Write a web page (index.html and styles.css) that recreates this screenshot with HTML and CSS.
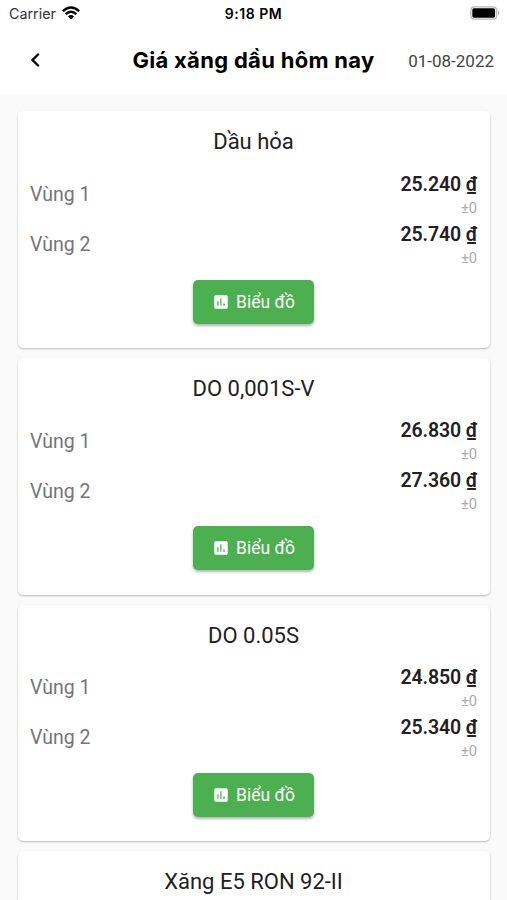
FILE: index.html
```html
<!DOCTYPE html>
<html lang="vi">
<head>
<meta charset="utf-8">
<title>Giá xăng dầu hôm nay</title>
<link rel="stylesheet" href="styles.css">
</head>
<body>
<svg class="defs" width="0" height="0" aria-hidden="true">
  <symbol id="chart" viewBox="0 0 24 24"><path fill-rule="evenodd" d="M19 3H5c-1.100 0-2 .9-2 2v14c0 1.100.9 2 2 2h14c1.100 0 2-.9 2-2V5c0-1.100-.9-2-2-2zM8.700 17H7v-6h1.700v6zm4 0H11V7h1.700v10zm4.300 0h-2v-3h2v3z"/></symbol>
</svg>
<header class="header">
  <div class="status">
    <div class="carrier"><span class="carrier-name">Carrier</span>
      <svg class="wifi" viewBox="0 0 18 14"><path d="M.9 5.200Q9-2.200 17.100 5.200M3.700 8.200Q9 3.200 14.300 8.200" fill="none" stroke="#000" stroke-width="2.500"/><path d="M6 10.400Q9 7.600 12 10.400L9 13.500Z"/></svg>
    </div>
    <span class="time">9:18 PM</span>
    <svg class="battery" viewBox="0 0 30 14"><rect x=".8" y=".8" width="25.800" height="12.400" rx="3.400" fill="#fff" stroke="#b8b8b8" stroke-width="1.300"/><rect x="2.300" y="2.300" width="22.800" height="9.400" rx="1.700"/><path d="M28 4.800q3 2.200 0 4.400z" fill="#aaa"/></svg>
  </div>
  <div class="navbar">
    <svg class="back" viewBox="0 0 12 16"><path d="M9.800 1.800 3.500 8l6.300 6.200" fill="none" stroke="#000" stroke-width="2.300"/></svg>
    <h1 class="heading">Giá xăng dầu hôm nay</h1>
    <span class="date">01-08-2022</span>
  </div>
</header>
<main class="list">
  <section class="card">
    <h2 class="name">Dầu hỏa</h2>
    <div class="row"><span class="zone">Vùng 1</span><div class="values"><b class="price">25.240 ₫</b><span class="delta">±0</span></div></div>
    <div class="row"><span class="zone">Vùng 2</span><div class="values"><b class="price">25.740 ₫</b><span class="delta">±0</span></div></div>
    <button class="button"><svg class="chart"><use href="#chart"/></svg><span class="label">Biểu đồ</span></button>
  </section>
  <section class="card">
    <h2 class="name">DO 0,001S-V</h2>
    <div class="row"><span class="zone">Vùng 1</span><div class="values"><b class="price">26.830 ₫</b><span class="delta">±0</span></div></div>
    <div class="row"><span class="zone">Vùng 2</span><div class="values"><b class="price">27.360 ₫</b><span class="delta">±0</span></div></div>
    <button class="button"><svg class="chart"><use href="#chart"/></svg><span class="label">Biểu đồ</span></button>
  </section>
  <section class="card">
    <h2 class="name">DO 0.05S</h2>
    <div class="row"><span class="zone">Vùng 1</span><div class="values"><b class="price">24.850 ₫</b><span class="delta">±0</span></div></div>
    <div class="row"><span class="zone">Vùng 2</span><div class="values"><b class="price">25.340 ₫</b><span class="delta">±0</span></div></div>
    <button class="button"><svg class="chart"><use href="#chart"/></svg><span class="label">Biểu đồ</span></button>
  </section>
  <section class="card card-last">
    <h2 class="name">Xăng E5 RON 92-II</h2>
  </section>
</main>
</body>
</html>
```
FILE: styles.css
```css
* { box-sizing: border-box; }
body { margin: 0; height: 900px; overflow: hidden; display: flex; flex-direction: column; background: #fafafa; color: #212121; font-family: Roboto, sans-serif; }
.defs { display: none; }
.header { flex: none; height: 94px; background: #fff; color: #000; font-family: Inter, sans-serif; }
.status { height: 28px; display: grid; grid-template-columns: 1fr auto 1fr; align-items: center; padding: 0 7px 2px; }
.carrier { display: flex; align-items: center; gap: 6px; padding-left: 2px; }
.carrier-name { font-size: 14.300px; color: #333; }
.wifi { width: 18px; height: 14px; }
.time { font-size: 14px; font-weight: 600; letter-spacing: .55px; }
.battery { width: 30px; height: 14px; justify-self: end; }
.navbar { height: 66px; display: grid; grid-template-columns: 1fr auto 1fr; align-items: center; padding: 0 13px 2px; }
.back { width: 12px; height: 16px; margin-left: 15.500px; }
.heading { margin: 0; font-size: 22px; font-weight: 650; letter-spacing: .3px; line-height: 30px; white-space: nowrap; }
.date { justify-self: end; font: 17px/24px Roboto, sans-serif; color: #444; padding-top: 2px; }
.list { flex: 1; min-height: 0; overflow: hidden; display: flex; flex-direction: column; gap: 10px; padding: 17.300px 17px 0 18px; }
.card { flex: none; height: 236.700px; display: flex; flex-direction: column; padding: 16px 13px 0 12px; background: #fff; border-radius: 5px; box-shadow: 0 1px 2px rgba(0, 0, 0, .27); }
.card-last { flex: 1; height: auto; min-height: 0; border-radius: 5px 5px 0 0; }
.name { margin: 0 0 14.300px; font-size: 22px; font-weight: 400; line-height: 29px; text-align: center; }
.row { height: 50px; display: flex; justify-content: space-between; align-items: center; }
.zone { font-size: 19.500px; line-height: 24px; margin-top: -1px; color: #757575; }
.values { display: flex; flex-direction: column; align-items: flex-end; }
.price { font-size: 19.500px; font-weight: 600; letter-spacing: -.1px; line-height: 26px; margin-top: -1px; }
.delta { font-size: 14.700px; line-height: 21px; color: #aaa; }
.button { align-self: center; width: 121px; height: 44px; margin-top: 9px; padding: 0; border: 0; border-radius: 5px; background: #4caf50; color: #fff; display: flex; align-items: center; justify-content: center; gap: 6px; font: 17.500px/24px Roboto, sans-serif; box-shadow: 0 2px 3px rgba(0, 0, 0, .3); }
.chart { width: 18px; height: 18px; fill: #fff; }
```
